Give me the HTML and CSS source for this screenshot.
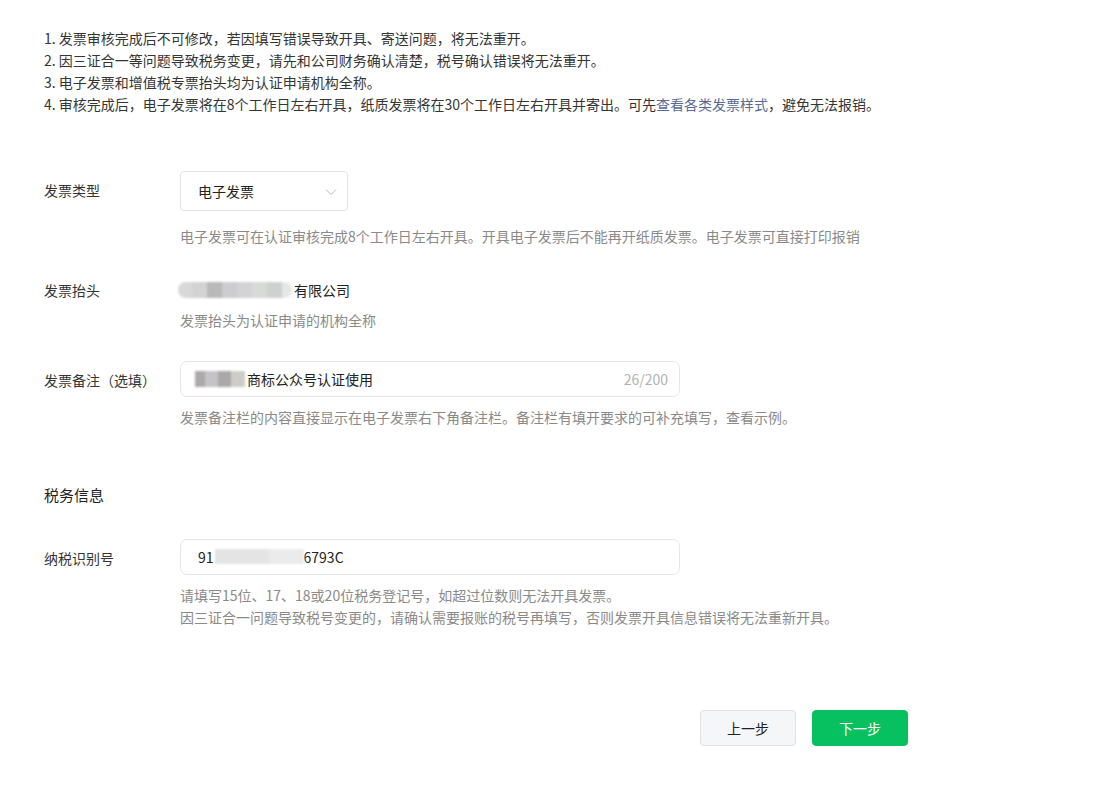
FILE: index.html
```html
<!DOCTYPE html>
<html lang="zh-CN">
<head>
<meta charset="utf-8">
<link rel="stylesheet" href="styles.css">
</head>
<body>
<div class="page">
  <div class="notes">
    <p>1. 发票审核完成后不可修改，若因填写错误导致开具、寄送问题，将无法重开。</p>
    <p>2. 因三证合一等问题导致税务变更，请先和公司财务确认清楚，税号确认错误将无法重开。</p>
    <p>3. 电子发票和增值税专票抬头均为认证申请机构全称。</p>
    <p>4. 审核完成后，电子发票将在8个工作日左右开具，纸质发票将在30个工作日左右开具并寄出。可先<a class="link">查看各类发票样式</a>，避免无法报销。</p>
  </div>

  <div class="form">
    <div class="row row-type">
      <div class="label">发票类型</div>
      <div class="field">
        <div class="select">
          <span>电子发票</span>
          <svg class="arrow" width="12" height="8" viewBox="0 0 12 8"><path d="M1 1.5 L6 6.5 L11 1.5" fill="none" stroke="#b8b8b8" stroke-width="1"/></svg>
        </div>
        <div class="help">电子发票可在认证审核完成8个工作日左右开具。开具电子发票后不能再开纸质发票。电子发票可直接打印报销</div>
      </div>
    </div>

    <div class="row row-title">
      <div class="label">发票抬头</div>
      <div class="field">
        <div class="value"><span class="blur blur-title"><i class="b1"></i><i class="b2"></i><i class="b3"></i><i class="b4"></i><i class="b5"></i><i class="b6"></i><i class="b7"></i><i class="b8"></i></span>有限公司</div>
        <div class="help help-tight">发票抬头为认证申请的机构全称</div>
      </div>
    </div>

    <div class="row row-remark">
      <div class="label">发票备注（选填）</div>
      <div class="field">
        <div class="input input-remark">
          <span class="text"><span class="blur blur-remark"><i class="c1"></i><i class="c2"></i><i class="c3"></i><i class="c4"></i></span>商标公众号认证使用</span>
          <span class="counter">26/200</span>
        </div>
        <div class="help help-remark">发票备注栏的内容直接显示在电子发票右下角备注栏。备注栏有填开要求的可补充填写，查看示例。</div>
      </div>
    </div>

    <h3 class="section">税务信息</h3>

    <div class="row row-tax">
      <div class="label">纳税识别号</div>
      <div class="field">
        <div class="input input-tax">
          <span class="text">91<span class="blur blur-tax"><i class="d1"></i><i class="d2"></i><i class="d3"></i></span>6793C</span>
        </div>
        <div class="help help-remark">请填写15位、17、18或20位税务登记号，如超过位数则无法开具发票。<br>因三证合一问题导致税号变更的，请确认需要报账的税号再填写，否则发票开具信息错误将无法重新开具。</div>
      </div>
    </div>
  </div>

  <div class="actions">
    <button class="btn btn-prev">上一步</button>
    <button class="btn btn-next">下一步</button>
  </div>
</div>
</body>
</html>
```

FILE: styles.css
```css
* { box-sizing: border-box; }
html, body { margin: 0; padding: 0; background: #fff; }
body {
  font-family: "Noto Sans CJK SC", "Noto Sans", sans-serif;
  font-size: 14px;
  color: #353535;
  width: 1112px;
  height: 792px;
  overflow: hidden;
}
.page { padding: 27px 0 0 44px; }
.notes p { margin: 0; line-height: 22px; font-size: 14px; }
.link { color: #576b95; text-decoration: none; }

.form { margin-top: 56px; }
.row { display: flex; }
.label { width: 136px; flex: none; line-height: 22px; }
.field { display: flex; flex-direction: column; }

.row-type .label { padding-top: 8px; }
.select {
  width: 168px; height: 40px;
  border: 1px solid #e3e3e3; border-radius: 4px;
  display: flex; align-items: center; justify-content: space-between;
  padding: 0 10px 0 17px;
  color: #222; font-size: 14px;
}
.arrow { margin-top: 1px; }
.help { color: #8a8a8a; font-size: 14px; line-height: 22px; margin-top: 14px; }

.row-title { margin-top: 32px; }
.value { line-height: 22px; display: flex; align-items: center; color: #222; font-size: 14px; }
.help-tight { margin-top: 8px; }

.blur { display: inline-flex; height: 16px; filter: blur(0.8px); }
.blur i { display: block; height: 16px; }
.blur-title { margin-left: -2px; margin-right: 2px; }
.blur-title .b1 { width: 14px; background: #d8d8d8; border-radius: 8px 0 0 8px; }
.blur-title .b2 { width: 15px; background: #d2d3d2; }
.blur-title .b3 { width: 15px; background: #b9b9ba; }
.blur-title .b4 { width: 15px; background: #cdcccf; }
.blur-title .b5 { width: 15px; background: #d3d2d6; }
.blur-title .b6 { width: 15px; background: #d7dad6; }
.blur-title .b7 { width: 15px; background: #cfd1d1; }
.blur-title .b8 { width: 10px; background: #e6e7e7; border-radius: 0 8px 8px 0; }

.row-remark { margin-top: 30px; }
.row-remark .label { padding-top: 8px; }
.input {
  width: 500px; height: 36px;
  border: 1px solid #e6e6e6; border-radius: 7px;
  display: flex; align-items: center; justify-content: space-between;
  padding: 0 11px 0 17px;
  color: #222; font-size: 14px;
}
.input .text { display: flex; align-items: center; }
.counter { color: #b2b2b2; font-size: 14px; }
.help-remark { margin-top: 9px; }

.blur-remark .c1 { width: 10px; background: #ada9aa; }
.blur-remark .c2 { width: 13px; background: #c6c3c8; }
.blur-remark .c3 { width: 13px; background: #aaa9a8; }
.blur-remark .c4 { width: 14px; background: #cdcdc8; margin-right: 2px; }
.blur-remark { margin-left: -3px; }

.section {
  margin: 56px 0 0 0;
  font-weight: normal; font-size: 15px; line-height: 22px; color: #222;
}

.row-tax { margin-top: 33px; }
.row-tax .label { padding-top: 8px; }
.input-tax { border-radius: 7px; font-size: 14px; }
.blur-tax { margin: 0 0 0 1px; }
.blur-tax i { height: 15px; }
.blur-tax .d1 { width: 4px; background: #e2e4e4; }
.blur-tax .d2 { width: 50px; background: #e4e4e4; }
.blur-tax .d3 { width: 35px; background: #ebebeb; }

.actions {
  display: flex; gap: 16px;
  margin: 82px 0 0 656px;
}
.btn {
  width: 96px; height: 36px;
  border-radius: 4px;
  font-family: inherit; font-size: 14px;
  cursor: pointer;
}
.btn-prev { background: #f5f6f8; border: 1px solid #e1e2e4; color: #222; }
.btn-next { background: #07c160; border: 1px solid #07c160; color: #fff; }
```
